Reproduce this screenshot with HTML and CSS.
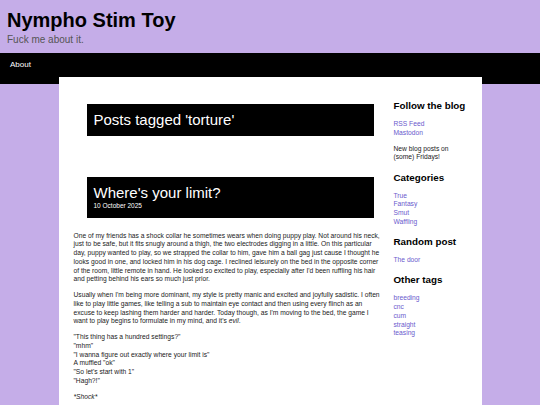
FILE: index.html
```html
<!DOCTYPE html>
<html>
<head>
<meta charset="utf-8">
<link rel="stylesheet" href="styles.css">
</head>
<body>
<header class="site-header">
  <div class="site-title">Nympho Stim Toy</div>
  <div class="site-tagline">Fuck me about it.</div>
</header>
<nav class="site-nav"><a href="#">About</a></nav>
<div class="container">
  <main class="main">
    <h1 class="page-title">Posts tagged 'torture'</h1>
    <article class="post">
      <header class="post-header">
        <h2 class="post-title">Where's your limit?</h2>
        <div class="post-date">10 October 2025</div>
      </header>
      <div class="post-body">
        <p>One of my friends has a shock collar he sometimes wears when doing puppy play. Not around his neck, just to be safe, but it fits snugly around a thigh, the two electrodes digging in a little. On this particular day, puppy wanted to play, so we strapped the collar to him, gave him a ball gag just cause I thought he looks good in one, and locked him in his dog cage. I reclined leisurely on the bed in the opposite corner of the room, little remote in hand. He looked so excited to play, especially after I'd been ruffling his hair and petting behind his ears so much just prior.</p>
        <p>Usually when I'm being more dominant, my style is pretty manic and excited and joyfully sadistic. I often like to play little games, like telling a sub to maintain eye contact and then using every flinch as an excuse to keep lashing them harder and harder. Today though, as I'm moving to the bed, the game I want to play begins to formulate in my mind, and it's <em>evil</em>.</p>
        <p>"This thing has a hundred settings?"<br>"mhm"<br>"I wanna figure out exactly where your limit is"<br>A muffled "ok"<br>"So let's start with 1"<br>"Hagh?!"</p>
        <p><em>*Shock*</em></p>
      </div>
    </article>
  </main>
  <aside class="sidebar">
    <h3 class="side-title side-first">Follow the blog</h3>
    <ul class="side-list">
      <li><a href="#">RSS Feed</a></li>
      <li><a href="#">Mastodon</a></li>
    </ul>
    <p class="side-text">New blog posts on (some) Fridays!</p>
    <h3 class="side-title">Categories</h3>
    <ul class="side-list">
      <li><a href="#">True</a></li>
      <li><a href="#">Fantasy</a></li>
      <li><a href="#">Smut</a></li>
      <li><a href="#">Waffling</a></li>
    </ul>
    <h3 class="side-title">Random post</h3>
    <ul class="side-list">
      <li><a href="#">The door</a></li>
    </ul>
    <h3 class="side-title">Other tags</h3>
    <ul class="side-list">
      <li><a href="#">breeding</a></li>
      <li><a href="#">cnc</a></li>
      <li><a href="#">cum</a></li>
      <li><a href="#">straight</a></li>
      <li><a href="#">teasing</a></li>
    </ul>
  </aside>
</div>
</body>
</html>
```

FILE: styles.css
```css
html, body {
  margin: 0;
  padding: 0;
  height: 100%;
}
body {
  background: #c5ade8;
  font-family: "Liberation Sans", Arial, sans-serif;
  color: #1a1a1a;
  font-size: 6.7px;
  line-height: 8.75px;
  overflow: hidden;
}
a {
  color: #6a5acd;
  text-decoration: none;
}
.site-header {
  padding: 9px 7px 0;
}
.site-title {
  font-size: 20px;
  font-weight: bold;
  line-height: 23px;
  color: #000;
}
.site-tagline {
  margin-top: 2px;
  font-size: 10px;
  line-height: 12px;
  color: #555;
}
.site-nav {
  margin-top: 7px;
  background: #000;
  height: 31px;
  box-sizing: border-box;
  padding: 7px 10px;
  font-size: 8px;
  line-height: 10px;
}
.site-nav a {
  color: #fff;
}
.container {
  margin: -7px auto 0;
  width: 423px;
  min-height: 400px;
  background: #fff;
  display: flex;
  box-sizing: border-box;
  padding: 27px 0 0 15px;
  gap: 12px;
}
.main {
  width: 308px;
  flex: none;
}
.page-title {
  margin: 0 8px 0 13px;
  background: #000;
  color: #fff;
  font-weight: normal;
  font-size: 15px;
  line-height: 18px;
  padding: 7px 7px;
}
.post {
  margin-top: 41px;
}
.post-header {
  margin: 0 8px 0 13px;
  background: #000;
  color: #fff;
  padding: 7px 7px 8px;
}
.post-title {
  margin: 0;
  font-weight: normal;
  font-size: 15px;
  line-height: 17px;
}
.post-date {
  font-size: 6.5px;
  line-height: 9px;
}
.post-body {
  padding-top: 6.5px;
}
.post-body p {
  margin: 7px 0;
}
.sidebar {
  width: 76px;
  flex: none;
  margin-top: -4px;
}
.side-title {
  font-size: 9.8px;
  line-height: 12.5px;
  font-weight: bold;
  margin: 9.5px 0 7.5px;
  color: #000;
  white-space: nowrap;
}
.side-first {
  margin-top: 0;
}
.side-list {
  list-style: none;
  margin: 7px 0;
  padding: 0;
}
.side-text {
  margin: 7px 0;
  width: 72px;
}
```
